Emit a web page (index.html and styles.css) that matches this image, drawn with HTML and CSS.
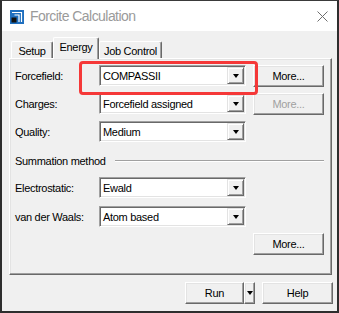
FILE: index.html
```html
<!DOCTYPE html>
<html>
<head>
<meta charset="utf-8">
<link rel="stylesheet" href="styles.css">
</head>
<body>
<div class="window">
  <div class="titlebar">
    <svg class="appicon" width="14" height="14" viewBox="0 0 14 14">
      <rect x="0" y="0" width="14" height="14" fill="#1f6fbf"/>
      <path d="M2 2.5 H11.5 V12" fill="none" stroke="#ffffff" stroke-width="1.2"/>
      <path d="M4.5 5 H9 V12" fill="none" stroke="#ffffff" stroke-width="1.2"/>
      <rect x="1.5" y="7.5" width="5" height="5" fill="#111111"/>
    </svg>
    <span class="title">Forcite Calculation</span>
    <svg class="close" width="11" height="11" viewBox="0 0 11 11">
      <path d="M0.5 0.5 L10.5 10.5 M10.5 0.5 L0.5 10.5" stroke="#6e6e6e" stroke-width="1"/>
    </svg>
  </div>
  <div class="body">
    <div class="tabs">
      <div class="tab tab-setup">Setup</div>
      <div class="tab tab-energy selected">Energy</div>
      <div class="tab tab-job">Job Control</div>
    </div>
    <div class="panel">
      <div class="row first">
        <span class="label">Forcefield:</span>
        <div class="combo"><span class="val">COMPASSII</span><span class="drop"><i class="tri"></i></span></div>
        <button class="btn more">More...</button>
      </div>
      <div class="row">
        <span class="label">Charges:</span>
        <div class="combo"><span class="val">Forcefield assigned</span><span class="drop"><i class="tri"></i></span></div>
        <button class="btn more disabled">More...</button>
      </div>
      <div class="row">
        <span class="label">Quality:</span>
        <div class="combo"><span class="val">Medium</span><span class="drop"><i class="tri"></i></span></div>
      </div>
      <div class="group">
        <span class="group-title">Summation method</span>
        <span class="group-line"></span>
      </div>
      <div class="row r-elec">
        <span class="label">Electrostatic:</span>
        <div class="combo"><span class="val">Ewald</span><span class="drop"><i class="tri"></i></span></div>
      </div>
      <div class="row r-vdw">
        <span class="label">van der Waals:</span>
        <div class="combo"><span class="val">Atom based</span><span class="drop"><i class="tri"></i></span></div>
      </div>
      <div class="more-row">
        <button class="btn more">More...</button>
      </div>
    </div>
    <div class="footer">
      <div class="split">
        <button class="btn run">Run</button>
        <button class="btn run-drop"><i class="tri"></i></button>
      </div>
      <button class="btn help">Help</button>
    </div>
  </div>
  <div class="highlight"></div>
</div>
</body>
</html>
```

FILE: styles.css
```css
* { box-sizing: border-box; }
html, body { margin: 0; padding: 0; background: #ffffff; }
body {
  font-family: "Liberation Sans", Arial, sans-serif;
  font-size: 11px;
  letter-spacing: -0.3px;
  color: #000;
}
.window {
  position: relative;
  width: 339px;
  height: 313px;
  border-top: 1px solid #3a3a3a;
  border-left: 2px solid #2e2e2e;
  border-right: 2px solid #2e2e2e;
  border-bottom: 2px solid #2e2e2e;
  background: #f0f0f0;
  display: flex;
  flex-direction: column;
}
.titlebar {
  height: 30px;
  background: #ffffff;
  display: flex;
  align-items: center;
  padding-left: 8px;
  flex: none;
}
.appicon { flex: none; margin-top: 1px; }
.title {
  margin-left: 6px;
  font-size: 14px;
  letter-spacing: -0.55px;
  color: #9a9a9a;
}
.close { margin-left: auto; margin-right: 9px; }
.body { flex: 1; display: flex; flex-direction: column; }
.tabs {
  display: flex;
  align-items: flex-end;
  height: 27px;
  padding-left: 9px;
  position: relative;
  z-index: 2;
}
.tab {
  height: 17px;
  border-top: 1px solid #ffffff;
  border-left: 1px solid #ffffff;
  border-right: 1px solid #696969;
  box-shadow: inset -1px 0 0 #a0a0a0;
  border-radius: 2px 2px 0 0;
  background: #f0f0f0;
  display: flex;
  align-items: center;
  justify-content: center;
  padding-top: 1px;
}
.tab-setup { width: 42px; }
.tab-energy { width: 46px; }
.tab-job { width: 63px; }
.tab.selected {
  height: 22px;
  margin-bottom: -1px;
  align-items: flex-start;
  padding-top: 3px;
}
.panel {
  margin-left: 7px;
  width: 323px;
  height: 217px;
  border-top: 1px solid #ffffff;
  border-left: 1px solid #ffffff;
  border-right: 1px solid #696969;
  border-bottom: 1px solid #696969;
  box-shadow: inset -1px -1px 0 #a0a0a0, inset 1px 1px 0 #e3e3e3;
  padding-left: 5px;
  display: flex;
  flex-direction: column;
}
.row {
  display: flex;
  align-items: center;
  height: 22px;
  margin-top: 6px;
}
.r-elec { margin-top: 9px; }
.r-vdw { margin-top: 7px; }
.label { width: 84px; flex: none; }
.combo {
  position: relative;
  width: 147px;
  height: 21px;
  background: #ffffff;
  border-top: 1px solid #a0a0a0;
  border-left: 1px solid #a0a0a0;
  border-right: 1px solid #ffffff;
  border-bottom: 1px solid #ffffff;
  box-shadow: inset 1px 1px 0 #696969, inset -1px -1px 0 #e3e3e3;
  display: flex;
  align-items: center;
  padding-left: 3px;
  align-self: flex-start;
}
.drop {
  position: absolute;
  right: 1px;
  top: 1px;
  width: 17px;
  height: 17px;
  background: #f0f0f0;
  border-top: 1px solid #e3e3e3;
  border-left: 1px solid #e3e3e3;
  border-right: 1px solid #696969;
  border-bottom: 1px solid #696969;
  box-shadow: inset 1px 1px 0 #ffffff, inset -1px -1px 0 #a0a0a0;
  display: flex;
  align-items: center;
  justify-content: center;
}
.tri {
  display: block;
  width: 0;
  height: 0;
  border-left: 3.5px solid transparent;
  border-right: 3.5px solid transparent;
  border-top: 4px solid #000;
}
.btn {
  font-family: "Liberation Sans", Arial, sans-serif;
  font-size: 11px;
  letter-spacing: -0.3px;
  color: #000;
  background: #f0f0f0;
  border-top: 1px solid #ffffff;
  border-left: 1px solid #ffffff;
  border-right: 1px solid #696969;
  border-bottom: 1px solid #696969;
  box-shadow: inset -1px -1px 0 #a0a0a0, inset 1px 1px 0 #e3e3e3;
  padding: 0;
  margin: 0;
  height: 22px;
  display: flex;
  align-items: center;
  justify-content: center;
}
.more { width: 71px; margin-left: 7px; align-self: flex-start; }
.disabled { color: #a0a0a0; }
.group {
  display: flex;
  align-items: center;
  height: 14px;
  margin-top: 11px;
}
.group-title { flex: none; }
.group-line {
  flex: none;
  width: 209px;
  margin-left: 9px;
  height: 2px;
  border-top: 1px solid #a0a0a0;
  border-bottom: 1px solid #ffffff;
}
.more-row {
  display: flex;
  margin-top: 5px;
}
.more-row .more { margin-left: 238px; }
.footer {
  display: flex;
  justify-content: flex-end;
  padding-right: 4px;
  margin-top: 7px;
}
.split { display: flex; }
.run { width: 59px; }
.run-drop { width: 11px; }
.help { width: 71px; margin-left: 7px; }
.highlight {
  position: absolute;
  left: 77px;
  top: 60px;
  width: 179px;
  height: 34px;
  border: 3px solid #f53838;
  border-radius: 4px;
  z-index: 5;
}
```
